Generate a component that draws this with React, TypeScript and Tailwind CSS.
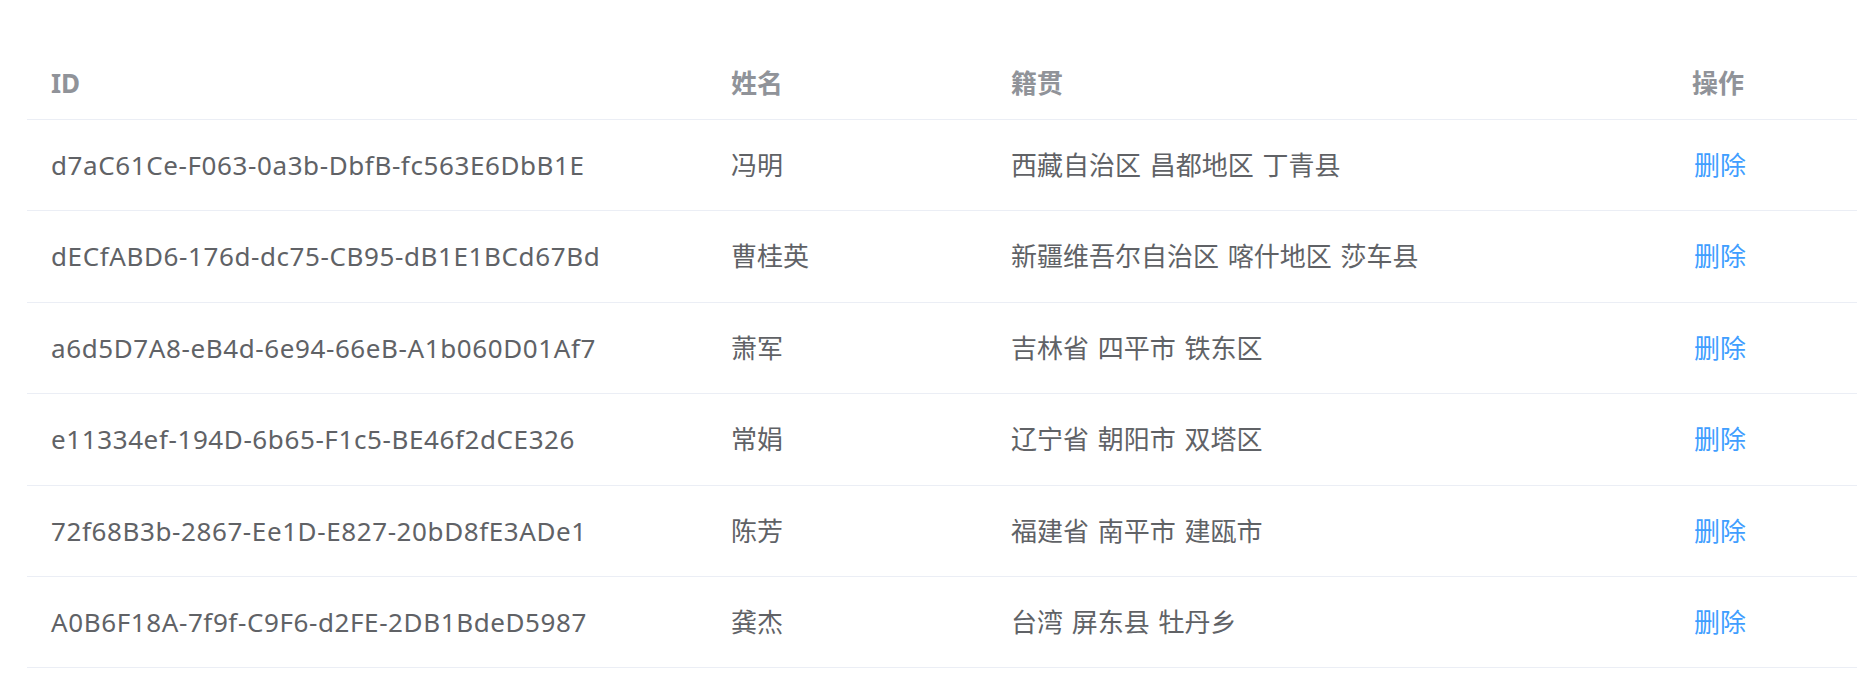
import React from "react";

interface Person {
  id: string;
  name: string;
  origin: string;
}

const people: Person[] = [
  { id: "d7aC61Ce-F063-0a3b-DbfB-fc563E6DbB1E", name: "冯明", origin: "西藏自治区 昌都地区 丁青县" },
  { id: "dECfABD6-176d-dc75-CB95-dB1E1BCd67Bd", name: "曹桂英", origin: "新疆维吾尔自治区 喀什地区 莎车县" },
  { id: "a6d5D7A8-eB4d-6e94-66eB-A1b060D01Af7", name: "萧军", origin: "吉林省 四平市 铁东区" },
  { id: "e11334ef-194D-6b65-F1c5-BE46f2dCE326", name: "常娟", origin: "辽宁省 朝阳市 双塔区" },
  { id: "72f68B3b-2867-Ee1D-E827-20bD8fE3ADe1", name: "陈芳", origin: "福建省 南平市 建瓯市" },
  { id: "A0B6F18A-7f9f-C9F6-d2FE-2DB1BdeD5987", name: "龚杰", origin: "台湾 屏东县 牡丹乡" },
];

// row heights incl. the 1px bottom border, taken from the screenshot
const rowHeights = ["h-[91px]", "h-[92px]", "h-[91px]", "h-[92px]", "h-[91px]", "h-[91px]"];

const App = () => {
  return (
    <div
      className="w-[1876px] h-[694px] bg-white pt-[47px] pl-[27px] text-[26px]"
      style={{ fontFamily: '"Noto Sans", "Noto Sans CJK SC", sans-serif' }}
    >
      <div className="w-[1830px]">
        {/* header */}
        <div className="flex items-center h-[73px] border-b border-[#ebeef5] font-bold text-[#909399]">
          <div className="w-[680px] pl-[24px]">ID</div>
          <div className="w-[280px] pl-[24px]">姓名</div>
          <div className="w-[681px] pl-[24px]">籍贯</div>
          <div className="flex-1 pl-[24px]">操作</div>
        </div>

        {people.map((p, i) => (
          <div
            key={p.id}
            className={`flex items-center border-b border-[#ebeef5] text-[#606266] ${rowHeights[i]}`}
          >
            <div className="w-[680px] pl-[24px] whitespace-nowrap tracking-[0.6px]">{p.id}</div>
            <div className="w-[280px] pl-[24px]">{p.name}</div>
            <div className="w-[681px] pl-[24px] whitespace-nowrap [word-spacing:2px]">{p.origin}</div>
            <div className="flex-1 pl-[26px]">
              <a href="#" className="text-[#409eff]">
                删除
              </a>
            </div>
          </div>
        ))}
      </div>
    </div>
  );
};

export default App;
